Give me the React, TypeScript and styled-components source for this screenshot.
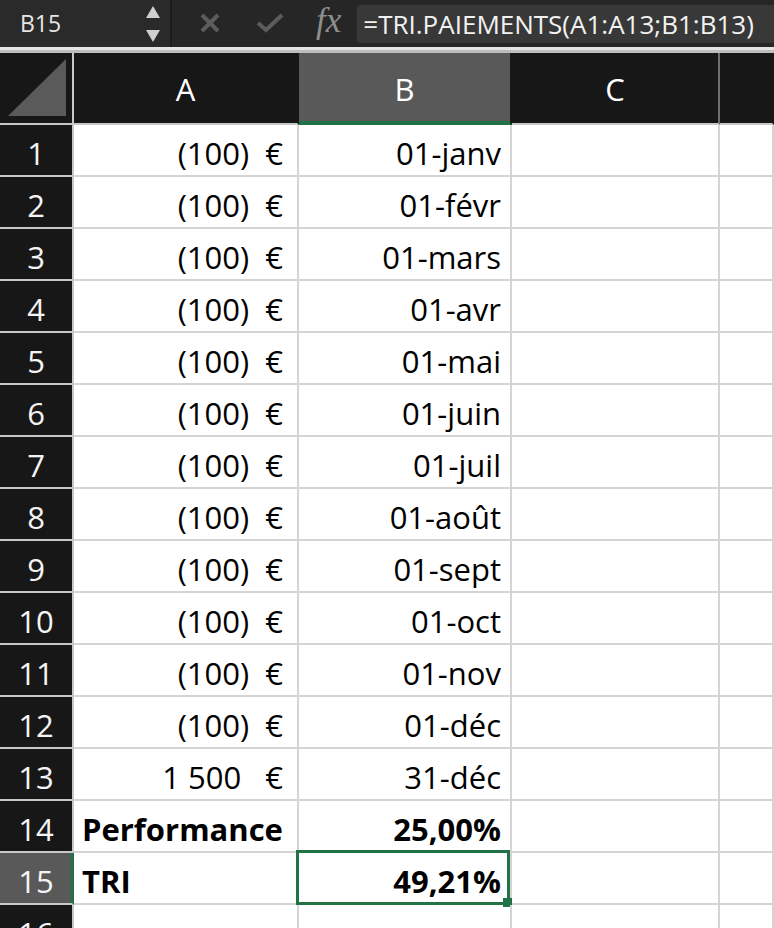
import styled, { createGlobalStyle } from 'styled-components';

const GREEN = '#217346';

const GlobalStyle = createGlobalStyle`
  body {
    margin: 0;
    background: #ffffff;
    font-family: 'Open Sans', 'Liberation Sans', sans-serif;
  }
`;

type Row = { a: string; b: string; bold?: boolean; left?: boolean };

const rows: Row[] = [
  { a: '(100)\u00a0\u00a0€', b: '01-janv' },
  { a: '(100)\u00a0\u00a0€', b: '01-févr' },
  { a: '(100)\u00a0\u00a0€', b: '01-mars' },
  { a: '(100)\u00a0\u00a0€', b: '01-avr' },
  { a: '(100)\u00a0\u00a0€', b: '01-mai' },
  { a: '(100)\u00a0\u00a0€', b: '01-juin' },
  { a: '(100)\u00a0\u00a0€', b: '01-juil' },
  { a: '(100)\u00a0\u00a0€', b: '01-août' },
  { a: '(100)\u00a0\u00a0€', b: '01-sept' },
  { a: '(100)\u00a0\u00a0€', b: '01-oct' },
  { a: '(100)\u00a0\u00a0€', b: '01-nov' },
  { a: '(100)\u00a0\u00a0€', b: '01-déc' },
  { a: '1\u00a0500\u00a0\u00a0\u00a0€', b: '31-déc' },
  { a: 'Performance', b: '25,00%', bold: true, left: true },
  { a: 'TRI', b: '49,21%', bold: true, left: true },
  { a: '', b: '' },
];

const SELECTED_ROW = 15;

export default function App() {
  return (
    <>
      <GlobalStyle />
      <Window>
        <FormulaBar>
          <NameBox>
            <span>B15</span>
            <Stepper>
              <svg width="14" height="36" viewBox="0 0 14 36">
                <polygon points="7,0 14,12 0,12" fill="#cfcfcf" />
                <polygon points="0,24 14,24 7,36" fill="#cfcfcf" />
              </svg>
            </Stepper>
          </NameBox>
          <BarSeparator />
          <ActionIcon $gap={28}>
            <svg width="20" height="20" viewBox="0 0 20 20">
              <path d="M2 2 L18 18 M18 2 L2 18" stroke="#5c5c5c" strokeWidth="4" />
            </svg>
          </ActionIcon>
          <ActionIcon $gap={36}>
            <svg width="28" height="20" viewBox="0 0 28 20">
              <polyline points="2,10 10,17 26,2" fill="none" stroke="#5c5c5c" strokeWidth="4" />
            </svg>
          </ActionIcon>
          <Fx>fx</Fx>
          <FormulaInput>=TRI.PAIEMENTS(A1:A13;B1:B13)</FormulaInput>
        </FormulaBar>
        <BarDivider />
        <Sheet>
          <Corner>
            <svg width="60" height="60" viewBox="0 0 60 60">
              <polygon points="58,0 58,57 0,57" fill="#5a5a5a" />
            </svg>
          </Corner>
          <ColHeader $line="#171717">A</ColHeader>
          <ColHeader $line="#171717" $active>B</ColHeader>
          <ColHeader $line="#6e6e6e">C</ColHeader>
          <ColHeader $line="transparent" />

          {rows.map((r, i) => {
            const n = i + 1;
            const active = n === SELECTED_ROW;
            return (
              <RowGroup key={n}>
                <RowHeader $active={active}>{n}</RowHeader>
                <Cell $bold={r.bold} $left={r.left} $pad={r.left ? 8 : 14}>
                  {r.a}
                </Cell>
                <Cell $bold={r.bold} $pad={9} $selected={active}>
                  {r.b}
                </Cell>
                <Cell />
                <Cell />
              </RowGroup>
            );
          })}
        </Sheet>
      </Window>
    </>
  );
}

const Window = styled.div`
  width: 774px;
  height: 928px;
  overflow: hidden;
  background: #ffffff;
`;

const FormulaBar = styled.div`
  display: flex;
  align-items: center;
  height: 47px;
  background: #262626;
`;

const NameBox = styled.div`
  width: 170px;
  height: 100%;
  box-sizing: border-box;
  padding: 0 10px 2px 20px;
  display: flex;
  align-items: center;
  justify-content: space-between;
  background: #2a2a2a;
  color: #e6e6e6;
  font-size: 23px;
`;

const Stepper = styled.div`
  display: flex;
  padding-top: 2px;
`;

const BarSeparator = styled.div`
  width: 2px;
  height: 100%;
  background: #1b1b1b;
`;

const ActionIcon = styled.div<{ $gap: number }>`
  display: flex;
  margin-left: ${(p) => p.$gap}px;
  margin-bottom: 2px;
`;

const Fx = styled.span`
  margin-left: 32px;
  font-family: 'Liberation Serif', 'DejaVu Serif', serif;
  font-style: italic;
  font-size: 35px;
  color: #8e8e8e;
  margin-bottom: 6px;
`;

const FormulaInput = styled.div`
  flex: 1;
  height: 38px;
  margin-left: 16px;
  padding-left: 6px;
  display: flex;
  align-items: center;
  background: #383838;
  border-radius: 4px 0 0 4px;
  color: #f2f2f2;
  font-size: 26px;
  white-space: nowrap;
`;

const BarDivider = styled.div`
  height: 3px;
  background: #e4e4e4;
  border-bottom: 3px solid #bdbdbd;
`;

const Sheet = styled.div`
  display: grid;
  grid-template-columns: 74px 225px 213px 208px 1fr;
  grid-template-rows: 72px;
  grid-auto-rows: 52px;
`;

const RowGroup = styled.div`
  display: contents;
`;

const Corner = styled.div`
  background: #171717;
  border-right: 2px solid #c8c8c8;
  border-bottom: 2px solid #c8c8c8;
  display: flex;
  align-items: flex-end;
  justify-content: flex-end;
  padding: 0 4px 4px 0;
`;

const ColHeader = styled.div<{ $active?: boolean; $line: string }>`
  background: ${(p) => (p.$active ? '#595959' : '#171717')};
  color: #ffffff;
  font-size: 31px;
  display: flex;
  align-items: center;
  justify-content: center;
  padding-top: 2px;
  border-right: 2px solid ${(p) => p.$line};
  border-bottom: 2px solid ${(p) => (p.$active ? GREEN : '#c8c8c8')};
  box-shadow: ${(p) => (p.$active ? `inset 0 -2px 0 ${GREEN}` : 'none')};
`;

const RowHeader = styled.div<{ $active?: boolean }>`
  background: ${(p) => (p.$active ? '#595959' : '#171717')};
  color: #f4f4f4;
  font-size: 31px;
  line-height: 1;
  display: flex;
  align-items: flex-end;
  justify-content: center;
  padding-bottom: 6px;
  border-right: 2px solid ${(p) => (p.$active ? GREEN : '#c8c8c8')};
  border-bottom: 2px solid #c8c8c8;
  box-shadow: ${(p) => (p.$active ? `inset -1px 0 0 ${GREEN}` : 'none')};
`;

const Cell = styled.div<{ $bold?: boolean; $left?: boolean; $pad?: number; $selected?: boolean }>`
  position: relative;
  display: flex;
  align-items: flex-end;
  justify-content: ${(p) => (p.$left ? 'flex-start' : 'flex-end')};
  padding: ${(p) => (p.$left ? `0 0 6px ${p.$pad}px` : `0 ${p.$pad ?? 0}px 6px 0`)};
  font-size: 31px;
  line-height: 1;
  font-weight: ${(p) => (p.$bold ? 700 : 400)};
  color: #000000;
  white-space: pre;
  border-right: 2px solid #d4d4d4;
  border-bottom: 2px solid #d4d4d4;

  ${(p) =>
    p.$selected &&
    `
    &::before {
      content: '';
      position: absolute;
      top: -3px;
      left: -3px;
      right: 0;
      bottom: -2px;
      border: 3px solid ${GREEN};
      pointer-events: none;
    }
    &::after {
      content: '';
      position: absolute;
      right: -2px;
      bottom: -4px;
      width: 9px;
      height: 9px;
      background: ${GREEN};
    }
  `}
`;
